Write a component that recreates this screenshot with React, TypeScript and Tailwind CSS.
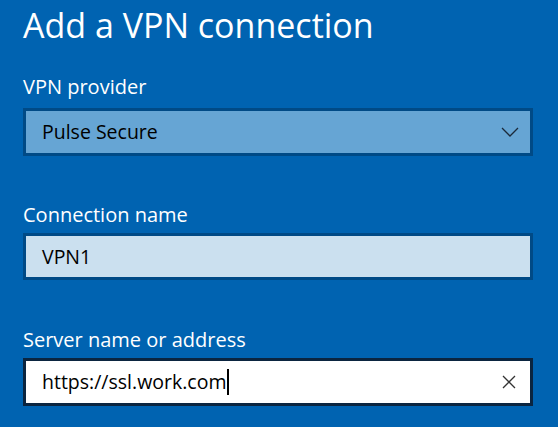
import React from "react";

const font = { fontFamily: '"Open Sans", "Noto Sans", sans-serif' };

export default function App() {
  return (
    <div
      className="w-[558px] h-[427px] overflow-hidden bg-[#0063b1] text-white flex flex-col pl-[23px] pr-[25px]"
      style={font}
    >
      <h1 className="mt-[5px] text-[34px] leading-[40px] font-normal">
        Add a VPN connection
      </h1>

      <label className="mt-[30px] text-[20px] leading-[24px]">VPN provider</label>
      <div className="mt-[9px] h-[48px] border-[3px] border-[#004a86] bg-[#66a5d4] flex items-center pl-[16px] pr-[11px] text-black">
        <span className="flex-1 text-[19.5px]">Pulse Secure</span>
        <svg width="18" height="10" viewBox="0 0 18 10">
          <path d="M1 1 L9 9 L17 1" fill="none" stroke="#1b2a3a" strokeWidth="1.3" />
        </svg>
      </div>

      <label className="mt-[47px] text-[20px] leading-[24px]">Connection name</label>
      <div className="mt-[6px] h-[47px] border-[3px] border-[#004a86] bg-[#cbe0ef] flex items-center pl-[16px] text-black">
        <span className="text-[19.5px]">VPN1</span>
      </div>

      <label className="mt-[48px] text-[20px] leading-[24px]">Server name or address</label>
      <div className="mt-[6px] h-[48px] border-[3px] border-[#0b2540] bg-white flex items-center pl-[16px] pr-[14px] text-black">
        <span className="text-[19.5px]">https://ssl.work.com</span>
        <span className="ml-[1px] w-[2px] h-[26px] bg-black" />
        <span className="flex-1" />
        <svg width="14" height="14" viewBox="0 0 14 14">
          <path d="M1 1 L13 13 M13 1 L1 13" fill="none" stroke="#333" strokeWidth="1.3" />
        </svg>
      </div>
    </div>
  );
}
